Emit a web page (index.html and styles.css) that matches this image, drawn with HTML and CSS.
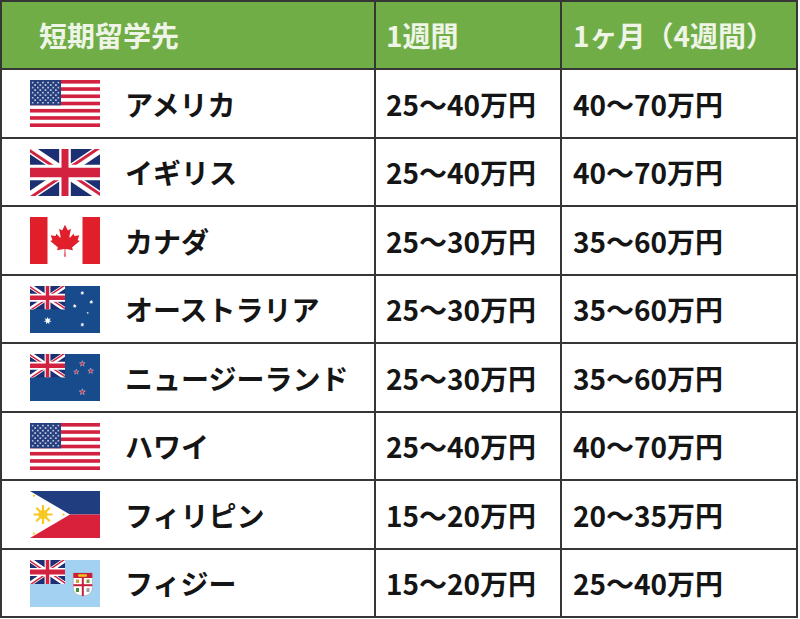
FILE: index.html
```html
<!DOCTYPE html>
<html lang="ja">
<head>
<meta charset="utf-8">
<title>短期留学の費用</title>
<link rel="stylesheet" href="styles.css">
</head>
<body>
<svg class="defs" width="0" height="0" aria-hidden="true">
  <defs>
    <clipPath id="ujt"><path d="M30,15 h30 v15 z v15 h-30 z h-30 v-15 z v-15 h30 z"/></clipPath>
    <pattern id="usstars" patternUnits="userSpaceOnUse" width="5.17" height="5.06">
      <circle cx="2.585" cy="2.53" r="0.8" fill="#fff"/>
      <circle cx="0" cy="0" r="0.8" fill="#fff"/>
      <circle cx="5.17" cy="0" r="0.8" fill="#fff"/>
      <circle cx="0" cy="5.06" r="0.8" fill="#fff"/>
      <circle cx="5.17" cy="5.06" r="0.8" fill="#fff"/>
    </pattern>
    <path id="st7" d="M0,-1 L.195,-.405 .782,-.623 .439,-.1 .975,.223 .352,.281 .434,.901 0,.45 -.434,.901 -.352,.281 -.975,.223 -.439,-.1 -.782,-.623 -.195,-.405Z"/>
    <path id="st5" d="M0,-1 L.224,-.309 .951,-.309 .363,.118 .588,.809 0,.382 -.588,.809 -.363,.118 -.951,-.309 -.224,-.309Z"/>
    <symbol id="uj" viewBox="0 0 60 30" preserveAspectRatio="none">
      <rect width="60" height="30" fill="#1d2f73"/>
      <path d="M0,0 L60,30 M60,0 L0,30" stroke="#fff" stroke-width="6"/>
      <path d="M0,0 L60,30 M60,0 L0,30" clip-path="url(#ujt)" stroke="#d3223f" stroke-width="4"/>
      <path d="M30,0 v30 M0,15 h60" stroke="#fff" stroke-width="10"/>
      <path d="M30,0 v30 M0,15 h60" stroke="#d3223f" stroke-width="6"/>
    </symbol>
    <symbol id="us" viewBox="0 0 70 47">
      <rect width="70" height="47" fill="#fff"/>
      <g fill="#d3223f">
        <rect y="0" width="70" height="3.62"/>
        <rect y="7.23" width="70" height="3.62"/>
        <rect y="14.46" width="70" height="3.62"/>
        <rect y="21.69" width="70" height="3.62"/>
        <rect y="28.92" width="70" height="3.62"/>
        <rect y="36.15" width="70" height="3.62"/>
        <rect y="43.38" width="70" height="3.62"/>
      </g>
      <rect width="31" height="25.3" fill="#263f7f"/>
      <rect x="1.5" y="1.5" width="28" height="22.3" fill="url(#usstars)"/>
    </symbol>
    <symbol id="gb" viewBox="0 0 70 47">
      <use href="#uj" width="70" height="47"/>
    </symbol>
    <symbol id="ca" viewBox="0 0 70 47">
      <rect width="70" height="47" fill="#fff"/>
      <rect width="17.5" height="47" fill="#e01f2b"/>
      <rect x="52.5" width="17.5" height="47" fill="#e01f2b"/>
      <path transform="translate(35 23.6) scale(0.0079)" fill="#e01f2b" d="m-90 2030 45-863a95 95 0 0 0-111-98l-859 151 116-320a65 65 0 0 0-20-73l-941-762 212-99a65 65 0 0 0 34-79l-186-572 542 115a65 65 0 0 0 73-38l105-247 423 454a65 65 0 0 0 111-57l-204-1052 327 189a65 65 0 0 0 91-27l332-652 332 652a65 65 0 0 0 91 27l327-189-204 1052a65 65 0 0 0 111 57l423-454 105 247a65 65 0 0 0 73 38l542-115-186 572a65 65 0 0 0 34 79l212 99-941 762a65 65 0 0 0-20 73l116 320-859-151a95 95 0 0 0-111 98l45 863z"/>
    </symbol>
    <symbol id="au" viewBox="0 0 70 47">
      <rect width="70" height="47" fill="#174b8c"/>
      <use href="#uj" width="35" height="23.5"/>
      <g fill="#fff">
        <use href="#st7" transform="translate(17.7 34.7) scale(4)"/>
        <use href="#st7" transform="translate(52.3 7) scale(2.2)"/>
        <use href="#st7" transform="translate(61.3 16) scale(2.2)"/>
        <use href="#st7" transform="translate(44.7 20) scale(2.2)"/>
        <use href="#st5" transform="translate(57.7 27) scale(1.3)"/>
        <use href="#st7" transform="translate(52.3 38.7) scale(2.2)"/>
      </g>
    </symbol>
    <symbol id="nz" viewBox="0 0 70 47">
      <rect width="70" height="47" fill="#174b8c"/>
      <use href="#uj" width="35" height="23.5"/>
      <g fill="#c8203a" stroke="#e8e8f0" stroke-width="0.14">
        <use href="#st5" transform="translate(52.3 9.7) scale(3)"/>
        <use href="#st5" transform="translate(46.3 18) scale(2.8)"/>
        <use href="#st5" transform="translate(60.7 17) scale(3)"/>
        <use href="#st5" transform="translate(52.3 38) scale(3.2)"/>
      </g>
    </symbol>
    <symbol id="ph" viewBox="0 0 70 47">
      <rect width="70" height="23.5" fill="#1f3d7f"/>
      <rect y="23.5" width="70" height="23.5" fill="#d9213c"/>
      <polygon points="0,0 40,23.5 0,47" fill="#fff"/>
      <g stroke="#f7c81f" stroke-width="2.2">
        <path d="M13,14 V33 M3.5,23.5 H22.5 M6.3,16.8 L19.7,30.2 M19.7,16.8 L6.3,30.2"/>
      </g>
      <circle cx="13" cy="23.5" r="4.6" fill="#f7c81f"/>
      <g fill="#f7c81f">
        <use href="#st5" transform="translate(4 4.5) scale(1.8)"/>
        <use href="#st5" transform="translate(4 42.5) scale(1.8)"/>
        <use href="#st5" transform="translate(33.5 23.5) scale(1.8)"/>
      </g>
    </symbol>
    <symbol id="fj" viewBox="0 0 70 47">
      <rect width="70" height="47" fill="#a3d1f2"/>
      <use href="#uj" width="35" height="24"/>
      <path d="M43.3,13 H62.3 V28 Q62.3,35 52.8,36 Q43.3,35 43.3,28 Z" fill="#fff" stroke="#8a8a8a" stroke-width="0.4"/>
      <rect x="43.3" y="13" width="19" height="5" fill="#c8203a"/>
      <rect x="48" y="14.3" width="9" height="2.4" rx="1" fill="#f2c21c"/>
      <rect x="51.8" y="18" width="2" height="18" fill="#c8203a"/>
      <rect x="43.3" y="24.2" width="19" height="2" fill="#c8203a"/>
      <rect x="46" y="19.5" width="3" height="3.5" fill="#c9a03a"/>
      <rect x="56.5" y="19.5" width="3" height="3.5" fill="#7a9a3a"/>
      <rect x="46" y="28" width="3" height="4" fill="#4a8a3a"/>
      <rect x="56.5" y="28" width="3" height="4" fill="#9aa0a8"/>
    </symbol>
  </defs>
</svg>

<div class="cost-table" role="table">
  <div class="cell head c1" role="columnheader">短期留学先</div>
  <div class="cell head c2" role="columnheader">1週間</div>
  <div class="cell head c3" role="columnheader">1ヶ月（4週間）</div>

  <div class="cell country" role="cell"><svg class="flag" viewBox="0 0 70 47"><use href="#us"/></svg><span>アメリカ</span></div>
  <div class="cell num c2" role="cell">25〜40万円</div>
  <div class="cell num c3" role="cell">40〜70万円</div>

  <div class="cell country" role="cell"><svg class="flag" viewBox="0 0 70 47"><use href="#gb"/></svg><span>イギリス</span></div>
  <div class="cell num c2" role="cell">25〜40万円</div>
  <div class="cell num c3" role="cell">40〜70万円</div>

  <div class="cell country" role="cell"><svg class="flag" viewBox="0 0 70 47"><use href="#ca"/></svg><span>カナダ</span></div>
  <div class="cell num c2" role="cell">25〜30万円</div>
  <div class="cell num c3" role="cell">35〜60万円</div>

  <div class="cell country" role="cell"><svg class="flag" viewBox="0 0 70 47"><use href="#au"/></svg><span>オーストラリア</span></div>
  <div class="cell num c2" role="cell">25〜30万円</div>
  <div class="cell num c3" role="cell">35〜60万円</div>

  <div class="cell country" role="cell"><svg class="flag" viewBox="0 0 70 47"><use href="#nz"/></svg><span>ニュージーランド</span></div>
  <div class="cell num c2" role="cell">25〜30万円</div>
  <div class="cell num c3" role="cell">35〜60万円</div>

  <div class="cell country" role="cell"><svg class="flag" viewBox="0 0 70 47"><use href="#us"/></svg><span>ハワイ</span></div>
  <div class="cell num c2" role="cell">25〜40万円</div>
  <div class="cell num c3" role="cell">40〜70万円</div>

  <div class="cell country" role="cell"><svg class="flag" viewBox="0 0 70 47"><use href="#ph"/></svg><span>フィリピン</span></div>
  <div class="cell num c2" role="cell">15〜20万円</div>
  <div class="cell num c3" role="cell">20〜35万円</div>

  <div class="cell country" role="cell"><svg class="flag" viewBox="0 0 70 47"><use href="#fj"/></svg><span>フィジー</span></div>
  <div class="cell num c2" role="cell">15〜20万円</div>
  <div class="cell num c3" role="cell">25〜40万円</div>
</div>
</body>
</html>
```

FILE: styles.css
```css
* {
  box-sizing: border-box;
}

html, body {
  margin: 0;
  padding: 0;
  background: #fff;
}

body {
  font-family: "Noto Sans CJK JP", "Noto Sans", sans-serif;
  font-weight: 700;
  font-size: 28px;
  line-height: 1;
  color: #151515;
}

.defs {
  position: absolute;
  width: 0;
  height: 0;
  overflow: hidden;
}

.cost-table {
  display: grid;
  grid-template-columns: 374px 186px 236px;
  grid-template-rows: 68px 69px 68px 69px 68px 69px 68px 69px 68px;
  width: max-content;
  border-top: 2px solid #363636;
  border-left: 2px solid #363636;
}

.cell {
  display: flex;
  align-items: center;
  border-right: 2px solid #363636;
  border-bottom: 2px solid #363636;
  white-space: nowrap;
}

.head {
  background: #70ad47;
  color: #eef5e6;
}

.head.c1 {
  padding-left: 37px;
}

.c2 {
  padding-left: 10px;
}

.c3 {
  padding-left: 11px;
}

.country {
  padding-left: 28px;
  gap: 25px;
}

.flag {
  width: 70px;
  height: 47px;
  flex: none;
  display: block;
}

.flag use {
  width: 70px;
  height: 47px;
}
```
